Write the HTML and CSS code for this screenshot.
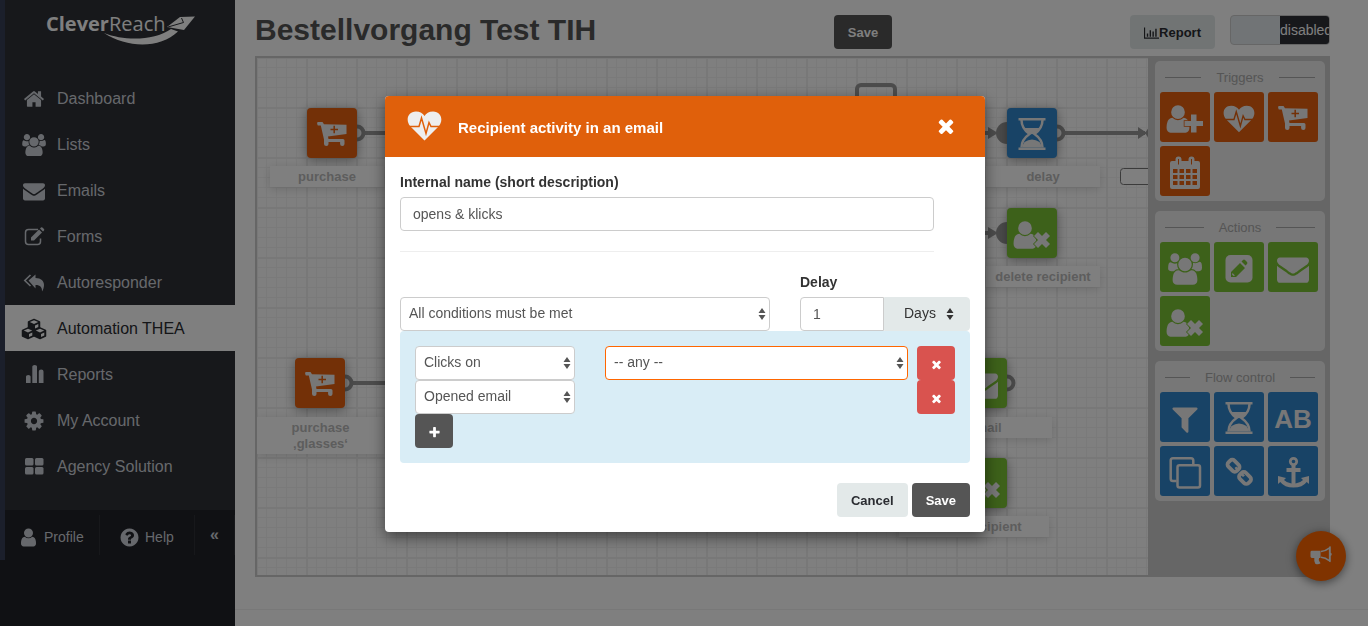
FILE: index.html
```html
<!DOCTYPE html>
<html lang="en">
<head>
<meta charset="utf-8">
<title>CleverReach – Automation THEA</title>
<link rel="stylesheet" href="styles.css">
</head>
<body>
<svg class="sprite" aria-hidden="true">
  <symbol id="home" viewBox="0 0 1792 1792"><path d="M1472 992v480q0 26-19 45t-45 19h-384v-384h-256v384h-384q-26 0-45-19t-19-45v-480q0-1 .5-3t.5-3l575-474 575 474q1 2 1 6zm223-69l-62 74q-8 9-21 11h-3q-13 0-21-7l-692-577-692 577q-12 8-24 7-13-2-21-11l-62-74q-8-10-7-23.500t11-21.500l719-599q32-26 76-26t76 26l244 204v-195q0-14 9-23t23-9h192q14 0 23 9t9 23v408l219 182q10 8 11 21.500t-7 23.500z"/></symbol>
  <symbol id="users" viewBox="0 0 2048 1792"><path d="M657 896q-162 5-265 128h-134q-82 0-138-40.500t-56-118.500q0-353 124-353 6 0 43.500 21t97.500 42.500 119 21.500q67 0 133-23-5 37-5 66 0 159 90 287zm1071 637q0 120-73 189.500t-194 69.500h-874q-121 0-194-69.500t-73-189.500q0-53 3.500-103.500t14-109 26.500-108.500 43-97.500 62-81 85.500-53.500 111.500-20q10 0 43 21.500t73 48 107 48 135 21.500 135-21.500 107-48 73-48 43-21.500q61 0 111.500 20t85.500 53.500 62 81 43 97.500 26.500 108.500 14 109 3.500 103.500zm-1024-1277q0 106-75 181t-181 75-181-75-75-181 75-181 181-75 181 75 75 181zm704 384q0 159-112.500 271.500t-271.500 112.500-271.500-112.500-112.500-271.500 112.500-271.500 271.500-112.500 271.500 112.500 112.500 271.500zm576 225q0 78-56 118.500t-138 40.500h-134q-103-123-265-128 90-128 90-287 0-29-5-66 66 23 133 23 59 0 119-21.500t97.500-42.500 43.500-21q124 0 124 353zm-128-609q0 106-75 181t-181 75-181-75-75-181 75-181 181-75 181 75 75 181z"/></symbol>
  <symbol id="envelope" viewBox="0 0 1792 1792"><path d="M1792 710v794q0 66-47 113t-113 47h-1472q-66 0-113-47t-47-113v-794q44 49 101 87 362 246 497 345 57 42 92.500 65.500t94.500 48 110 24.500h2q51 0 110-24.500t94.500-48 92.500-65.500q170-123 498-345 57-39 100-87zm0-294q0 79-49 151t-122 123q-376 261-468 325-10 7-42.500 31t-54 38.500-52 32.500-57.500 27-50 9h-2q-23 0-50-9t-57.500-27-52-32.500-54-38.500-42.500-31q-91-64-262-182.500t-205-142.500q-62-42-117-115.500t-55-136.500q0-78 41.500-130t118.500-52h1472q65 0 112.500 47t47.500 113z"/></symbol>
  <symbol id="user" viewBox="0 0 1792 1792"><path d="M1536 1399q0 109-62.500 187t-150.500 78h-854q-88 0-150.500-78t-62.500-187q0-85 8.500-160.500t31.500-152 58.500-131 94-89 134.500-34.500q131 128 313 128t313-128q76 0 134.500 34.500t94 89 58.500 131 31.500 152 8.500 160.500zm-256-887q0 159-112.500 271.500t-271.500 112.500-271.500-112.500-112.500-271.500 112.500-271.500 271.500-112.500 271.500 112.500 112.500 271.500z"/></symbol>
  <symbol id="cog" viewBox="0 0 1792 1792"><path d="M1152 896q0-106-75-181t-181-75-181 75-75 181 75 181 181 75 181-75 75-181zm512-109v222q0 12-8 23t-20 13l-185 28q-19 54-39 91 35 50 107 138 10 12 10 25t-9 23q-27 37-99 108t-94 71q-12 0-26-9l-138-108q-44 23-91 38-16 136-29 186-7 28-36 28h-222q-14 0-24.500-8.500t-11.500-21.500l-28-184q-49-16-90-37l-141 107q-10 9-25 9-14 0-25-11-126-114-165-168-7-10-7-23 0-12 8-23 15-21 51-66.500t54-70.500q-27-50-41-99l-183-27q-13-2-21-12.500t-8-23.500v-222q0-12 8-23t19-13l186-28q14-46 39-92-40-57-107-138-10-12-10-24 0-10 9-23 26-36 98.500-107.500t94.500-71.500q13 0 26 10l138 107q44-23 91-38 16-136 29-186 7-28 36-28h222q14 0 24.500 8.500t11.500 21.500l28 184q49 16 90 37l142-107q9-9 24-9 13 0 25 10 129 119 165 170 7 8 7 22 0 12-8 23-15 21-51 66.500t-54 70.500q26 50 41 98l183 28q13 2 21 12.500t8 23.500z"/></symbol>
  <symbol id="help" viewBox="0 0 1792 1792"><path d="M1024 1376v-192q0-14-9-23t-23-9h-192q-14 0-23 9t-9 23v192q0 14 9 23t23 9h192q14 0 23-9t9-23zm256-672q0-88-55.500-163t-138.500-116-170-41q-243 0-371 213-15 24 8 42l132 100q7 6 19 6 16 0 25-12 53-68 86-92 34-24 86-24 48 0 85.500 26t37.500 59q0 38-20 61t-68 45q-63 28-115.500 86.500t-52.500 125.500v36q0 14 9 23t23 9h192q14 0 23-9t9-23q0-19 21.500-49.500t54.500-49.500q32-18 49-28.500t46-35 44.500-48 28-60.500 12.500-81zm384 192q0 209-103 385.500t-279.500 279.500-385.500 103-385.500-103-279.500-279.500-103-385.500 103-385.500 279.500-279.500 385.500-103 385.500 103 279.500 279.500 103 385.500z"/></symbol>
  <symbol id="times" viewBox="0 0 1792 1792"><path d="M1490 1322q0 40-28 68l-136 136q-28 28-68 28t-68-28l-294-294-294 294q-28 28-68 28t-68-28l-136-136q-28-28-28-68t28-68l294-294-294-294q-28-28-28-68t28-68l136-136q28-28 68-28t68 28l294 294 294-294q28-28 68-28t68 28l136 136q28 28 28 68t-28 68l-294 294 294 294q28 28 28 68z"/></symbol>
  <symbol id="plus" viewBox="0 0 1792 1792"><path d="M1600 736v192q0 40-28 68t-68 28h-416v416q0 40-28 68t-68 28h-192q-40 0-68-28t-28-68v-416h-416q-40 0-68-28t-28-68v-192q0-40 28-68t68-28h416v-416q0-40 28-68t68-28h192q40 0 68 28t28 68v416h416q40 0 68 28t28 68z"/></symbol>
  <symbol id="filter" viewBox="0 0 1792 1792"><path d="M1595 295q17 41-14 70l-493 493v742q0 42-39 59-13 5-25 5-27 0-45-19l-256-256q-19-19-19-45v-486l-493-493q-31-29-14-70 17-39 59-39h1280q42 0 59 39z"/></symbol>
  <symbol id="edit" viewBox="0 0 22 22"><path d="M15 3.500H5.500a3 3 0 0 0-3 3v9a3 3 0 0 0 3 3h9a3 3 0 0 0 3-3v-3" fill="none" stroke="currentColor" stroke-width="1.500"/><path d="M8 11.500 16 3.500l3 3-8 8H8zM17 2.500l1-1q.7-.6 1.400 0l1.600 1.600q.6.700 0 1.400l-1 1z"/></symbol>
  <symbol id="reply" viewBox="0 0 22 22"><path d="M5.500 8.500 12.500 2.500v3.500c5.500 0 8.500 3 8.500 7 0 2.500-1 5-2 6.500.2-4-1.500-6.500-6.500-6.500v3.500z"/><path d="M7.500 3 1.800 8.500l5.700 5.500" fill="none" stroke="currentColor" stroke-width="1.600"/></symbol>
  <symbol id="cubes" viewBox="0 0 26 22"><g stroke="currentColor" stroke-width="1.500" stroke-linejoin="round"><path d="M7.500 4 13 1.500 18.500 4v5.500L13 12 7.500 9.500z"/><path class="cube-top" d="M8.800 4.100 13 2.300l4.200 1.800L13 5.900z"/><path class="cube-top" d="M14 7.500 17.300 6v3L14 10.400z"/><path d="M1.500 12.500 7 10l5.500 2.500V18L7 20.500 1.500 18z"/><path class="cube-top" d="M2.800 12.600 7 10.800l4.200 1.800L7 14.400zM8 16l3.300-1.500v3L8 18.900z"/><path d="M13.500 12.500 19 10l5.500 2.500V18L19 20.500 13.500 18z"/><path class="cube-top" d="M14.800 12.600 19 10.800l4.200 1.800-4.200 1.800zM20 16l3.300-1.500v3L20 18.900z"/></g></symbol>
  <symbol id="bars" viewBox="0 0 22 22"><path d="M3 19v-6.500q0-1.500 2.300-1.500t2.300 1.500V19zM9.300 19V2.500Q9.300 1 11.700 1T14 2.500V19zM15.800 19V7.500q0-2 2.400-2t2.300 2V19z"/></symbol>
  <symbol id="large" viewBox="0 0 22 22"><rect x="2" y="2" width="8.500" height="7.500" rx="1.500"/><rect x="12" y="2" width="8.500" height="7.500" rx="1.500"/><rect x="2" y="11" width="8.500" height="7.500" rx="1.500"/><rect x="12" y="11" width="8.500" height="7.500" rx="1.500"/></symbol>
  <symbol id="chart" viewBox="0 0 16 12"><path d="M0 0h1.200v10.800H16V12H0zM3 6.500h1.500V10H3zM6 3h1.500v7H6zM9 4.500h1.500V10H9zM12 1.500h1.500V10H12z"/></symbol>
  <symbol id="heart" viewBox="0 0 35 30"><path d="M17.500 29.500 3 15C-1.500 9.500 .5 .5 9 .5c4 0 7 2 8.500 4.500C19 2.500 22 .5 26 .5c8.500 0 10.500 9 6 14.500z"/><path class="cut" d="M0 15.500h12L14.500 7l4.500 15.500L22 11.500l2 4h11"/></symbol>
  <symbol id="t-heart" viewBox="0 0 50 50"><use href="#heart" x="9" y="13" width="32" height="28"/></symbol>
  <symbol id="t-cart" viewBox="0 0 50 50"><path d="M10.500 14h5l1.500 2.300 22.500.4v9.300L21 28.500l.5 2.500H36q1.500 0 1.500 1.500v3.500q0 2-2.200 2t-2.200-2V34H21.500v2q0 2-2.200 2T17 36v-4.500L13.800 17.500h-3q-1.300-1.700-.3-3.500z"/><path class="cut" d="M23.500 21.500h7.500M27.200 17.800v7.500"/></symbol>
  <symbol id="t-person" viewBox="0 0 50 50"><use href="#user" x="2" y="11" width="32" height="32"/></symbol>
  <symbol id="t-add" viewBox="0 0 50 50"><use href="#t-person" width="50" height="50"/><path class="halo" d="M31 22.500h5.500v6.500H43v5h-6.500v6.500H31V34h-6.500v-5H31z"/><path d="M31 22.500h5.500v6.500H43v5h-6.500v6.500H31V34h-6.500v-5H31z"/></symbol>
  <symbol id="t-remove" viewBox="0 0 50 50"><use href="#t-person" width="50" height="50"/><path class="halo" d="m31 24 4 4 4-4 4 4-4 4 4 4-4 4-4-4-4 4-4-4 4-4-4-4z"/><path d="m31 24 4 4 4-4 4 4-4 4 4 4-4 4-4-4-4 4-4-4 4-4-4-4z"/></symbol>
  <symbol id="t-calendar" viewBox="0 0 50 50"><path d="M12 15h3.500v-1.500a3 3 0 0 1 6 0V15h7v-1.500a3 3 0 0 1 6 0V15H38q2 0 2 2v24q0 2-2 2H12q-2 0-2-2V17q0-2 2-2z"/><path class="hole" d="M13 23h4.500v4H13zM19.500 23H24v4h-4.500zM26 23h4.500v4H26zM32.500 23H37v4h-4.500zM13 29h4.500v4H13zM19.500 29H24v4h-4.500zM26 29h4.500v4H26zM32.500 29H37v4h-4.500zM13 35h4.500v4H13zM19.500 35H24v4h-4.500zM26 35h4.500v4H26zM32.500 35H37v4h-4.500zM18 13h1v5.500h-1zM31 13h1v5.500h-1z"/></symbol>
  <symbol id="t-users" viewBox="0 0 50 50"><use href="#users" x="7" y="11" width="36" height="32"/></symbol>
  <symbol id="t-pencil" viewBox="0 0 50 50"><rect x="11.500" y="13" width="27" height="27.500" rx="5"/><path class="hole" d="m17 30 9-9 5 5-9 9h-5zM27.500 19.500l1.500-1.500q1-.8 2 0l2 2q.8 1 0 2L31.500 23.500z"/><path d="m18.500 31 2.500 2.500-1.500.5-1.500-1.500z"/></symbol>
  <symbol id="t-envelope" viewBox="0 0 50 50"><use href="#envelope" x="9" y="11" width="32" height="32"/></symbol>
  <symbol id="t-filter" viewBox="0 0 50 50"><use href="#filter" x="9" y="11" width="32" height="32"/></symbol>
  <symbol id="t-hourglass" viewBox="0 0 50 50"><path d="M11.500 10h27v2.500h-27zM11.500 39.500h27V42h-27z"/><path d="M14.500 12c0 6 3 10.500 8 14-5 3.500-8 7.500-8 13.500M35.500 12c0 6-3 10.500-8 14 5 3.500 8 7.500 8 13.500" fill="none" stroke="currentColor" stroke-width="2.500"/><path d="M17 20h16q-2 3.500-6.500 6h-3Q19 23.500 17 20zM15.500 39.500q0-3 2-5.500Q25 29 32.500 34q2 2.500 2 5.500z"/></symbol>
  <symbol id="t-clone" viewBox="0 0 50 50"><g fill="none" stroke="currentColor" stroke-width="2.500"><path d="M16.500 35H13q-2.300 0-2.300-2.300V14.500q0-2.300 2.300-2.300h18q2.300 0 2.300 2.300V19"/><rect x="17.500" y="19.200" width="22.500" height="22.300" rx="2"/></g></symbol>
  <symbol id="t-chain" viewBox="0 0 50 50"><g fill="none" stroke="currentColor" stroke-width="3.800"><rect x="13.500" y="15.500" width="12" height="8.500" rx="3" transform="rotate(45 19.500 19.800)"/><rect x="25" y="27.700" width="12" height="8.500" rx="3" transform="rotate(45 31 32)"/></g><path d="m20.500 22 1.800-1.500 2.500 2.500-1.500 2zM26.500 29l2-2 2.500 2.500-2 1.500z"/></symbol>
  <symbol id="t-anchor" viewBox="0 0 50 50"><circle cx="25.500" cy="15.500" r="3.200" fill="none" stroke="currentColor" stroke-width="2.800"/><path d="M23.500 19h4v3h5v4h-5v11.500q5-.7 7.500-3.500l-2-2 8-2v8l-2.300-2q-4 5.500-13.200 5.500T12.300 36L10 38v-8l8 2-2 2q2.500 2.800 7.500 3.500V26h-5v-4h5z"/></symbol>
  <symbol id="bullhorn" viewBox="0 0 24 20"><path d="M2 4.500h9V12H9.500q-1 2 .5 4l1 1.500q-2.500 2-5.500.500Q4 15 4.500 12H2q-1.500 0-1.500-1.500V6Q.5 4.500 2 4.500z"/><path d="M11.500 5.300Q16 5 20.500 1.500v13.500Q16 11.500 11.500 11.200" fill="none" stroke="currentColor" stroke-width="1.600"/><path d="M20 0h1.500v6.500q1.200.3 1.200 1.700t-1.200 1.800V16H20z"/></symbol>
  <symbol id="sort" viewBox="0 0 8 12"><path d="M4 0 7.500 5h-7zM4 12 .5 7h7z"/></symbol>
</svg>

<div class="app">
  <aside class="sidebar">
    <div class="sidebar-body">
      <a class="logo" href="#" aria-label="CleverReach">
        <svg viewBox="0 -8 152 40" width="152" height="40">
          <text x="0" y="18" class="logo-bold">Clever</text>
          <text x="63" y="18" class="logo-light">Reach</text>
          <path d="M58 20c20 8 50 8 67-4l7 2.500c-18 17-50 17-74 1.500z"/>
          <path d="M121 14 134 4l15-.5-11 13.500z"/><path class="logo-line" d="M122 14l15.500-4.500-2-4.500"/>
        </svg>
      </a>
      <nav class="menu">
        <a href="#"><svg><use href="#home"/></svg>Dashboard</a>
        <a href="#"><svg><use href="#users"/></svg>Lists</a>
        <a href="#"><svg><use href="#envelope"/></svg>Emails</a>
        <a href="#"><svg><use href="#edit"/></svg>Forms</a>
        <a href="#"><svg><use href="#reply"/></svg>Autoresponder</a>
        <a href="#" class="active" aria-current="page"><svg><use href="#cubes"/></svg>Automation THEA</a>
        <a href="#"><svg><use href="#bars"/></svg>Reports</a>
        <a href="#"><svg><use href="#cog"/></svg>My Account</a>
        <a href="#"><svg><use href="#large"/></svg>Agency Solution</a>
      </nav>
      <div class="sidebar-foot">
        <a class="profile" href="#"><svg><use href="#user"/></svg>Profile</a>
        <a class="help" href="#"><svg><use href="#help"/></svg>Help</a>
        <button class="collapse" type="button" aria-label="Collapse menu">«</button>
      </div>
    </div>
  </aside>

  <main class="main">
    <header class="head">
      <h1>Bestellvorgang Test TIH</h1>
      <div class="head-actions">
        <button class="btn dark" type="button">Save</button>
        <button class="btn light report" type="button"><svg><use href="#chart"/></svg>Report</button>
        <button class="toggle" type="button" role="switch" aria-checked="false"><span class="knob"></span><span class="state">disabled</span></button>
      </div>
    </header>

    <section class="editor">
      <div class="stage">
        <svg class="wires" width="900" height="520" aria-hidden="true">
          <g fill="none" stroke="#999" stroke-width="4">
            <path d="M107 75H200M95 325H200M720 75h14M720 175h14M808 75h80"/>
            <circle cx="100" cy="75" r="6.500"/><circle cx="88" cy="325" r="6.500"/><circle cx="800" cy="75" r="6.500"/><circle cx="750" cy="325" r="6.500"/>
            <rect x="600" y="27" width="38" height="40" rx="4"/>
          </g>
          <g fill="#999">
            <circle cx="750" cy="75" r="11"/><circle cx="750" cy="175" r="11"/>
            <path d="M731 69l10 6-10 6zM731 169l10 6-10 6zM881 69l9 6-9 6zM892 69v12l-4-6z"/>
          </g>
          <rect class="slot" x="863.500" y="110.500" width="60" height="16" rx="3"/>
          <rect class="slot" x="663.500" y="460.500" width="80" height="16" rx="3"/>
        </svg>
        <div class="node orange n-purchase"><svg><use href="#t-cart"/></svg></div><div class="caption c-purchase">purchase</div>
        <div class="node orange n-glasses"><svg><use href="#t-cart"/></svg></div><div class="caption c-glasses">purchase<br>‚glasses‘</div>
        <div class="node blue n-delay"><svg><use href="#t-hourglass"/></svg></div><div class="caption c-delay">delay</div>
        <div class="node green n-delete"><svg><use href="#t-remove"/></svg></div><div class="caption c-delete">delete recipient</div>
        <div class="node green n-email"><svg><use href="#t-envelope"/></svg></div><div class="caption c-email">email</div>
        <div class="node green n-last"><svg><use href="#t-remove"/></svg></div><div class="caption c-last">delete recipient</div>
      </div>
      <div class="palette">
        <section class="group orange">
          <h2>Triggers</h2>
          <div class="tiles">
            <button type="button" aria-label="New recipient"><svg><use href="#t-add"/></svg></button>
            <button type="button" aria-label="Recipient activity"><svg><use href="#t-heart"/></svg></button>
            <button type="button" aria-label="Purchase"><svg><use href="#t-cart"/></svg></button>
            <button type="button" aria-label="Date"><svg><use href="#t-calendar"/></svg></button>
          </div>
        </section>
        <section class="group green">
          <h2>Actions</h2>
          <div class="tiles">
            <button type="button" aria-label="Recipient list"><svg><use href="#t-users"/></svg></button>
            <button type="button" aria-label="Edit recipient"><svg><use href="#t-pencil"/></svg></button>
            <button type="button" aria-label="Send email"><svg><use href="#t-envelope"/></svg></button>
            <button type="button" aria-label="Delete recipient"><svg><use href="#t-remove"/></svg></button>
          </div>
        </section>
        <section class="group blue">
          <h2>Flow control</h2>
          <div class="tiles">
            <button type="button" aria-label="Filter"><svg><use href="#t-filter"/></svg></button>
            <button type="button" aria-label="Delay"><svg><use href="#t-hourglass"/></svg></button>
            <button type="button" class="ab">AB</button>
            <button type="button" aria-label="Clone"><svg><use href="#t-clone"/></svg></button>
            <button type="button" aria-label="Link"><svg><use href="#t-chain"/></svg></button>
            <button type="button" aria-label="Anchor"><svg><use href="#t-anchor"/></svg></button>
          </div>
        </section>
      </div>
    </section>
    <div class="page-foot"></div>
  </main>
</div>

<button class="fab" type="button" aria-label="News"><svg><use href="#bullhorn"/></svg></button>

<div class="overlay">
  <form class="modal" role="dialog" aria-labelledby="dialog-title">
    <header class="modal-head">
      <svg class="modal-icon"><use href="#heart"/></svg>
      <h2 id="dialog-title">Recipient activity in an email</h2>
      <button class="close" type="button" aria-label="Close"><svg><use href="#times"/></svg></button>
    </header>
    <div class="modal-body">
      <div class="name-field">
        <label for="name">Internal name (short description)</label>
        <input id="name" class="control" type="text" value="opens &amp; klicks">
      </div>
      <div class="rule-row">
        <div class="pick match"><select class="control" aria-label="Match"><option>All conditions must be met</option></select><svg><use href="#sort"/></svg></div>
        <div class="delay">
          <label for="delay">Delay</label>
          <div class="delay-group">
            <input id="delay" class="control" type="text" value="1">
            <div class="pick unit"><select class="control" aria-label="Unit"><option>Days</option></select><svg><use href="#sort"/></svg></div>
          </div>
        </div>
      </div>
      <div class="conditions">
        <div class="condition">
          <div class="pick"><select class="control" aria-label="Condition 1"><option>Clicks on</option></select><svg><use href="#sort"/></svg></div>
          <div class="pick any"><select class="control" aria-label="Link"><option>-- any --</option></select><svg><use href="#sort"/></svg></div>
          <button class="btn square red" type="button" aria-label="Remove"><svg><use href="#times"/></svg></button>
        </div>
        <div class="condition">
          <div class="pick"><select class="control" aria-label="Condition 2"><option>Opened email</option></select><svg><use href="#sort"/></svg></div>
          <span></span>
          <button class="btn square red" type="button" aria-label="Remove"><svg><use href="#times"/></svg></button>
        </div>
        <button class="btn square dark" type="button" aria-label="Add"><svg><use href="#plus"/></svg></button>
      </div>
      <div class="modal-foot">
        <button class="btn light" type="button">Cancel</button>
        <button class="btn dark" type="submit">Save</button>
      </div>
    </div>
  </form>
</div>
</body>
</html>
```

FILE: styles.css
```css
* { box-sizing: border-box; }
html, body { height: 100%; }
body {
  margin: 0;
  overflow: hidden;
  font: 14px/20px "Liberation Sans", Arial, sans-serif;
  color: #333;
  background: #fff;
}
svg { fill: currentColor; flex: none; }
button, input, select { font: inherit; margin: 0; }
button { cursor: pointer; border: 0; padding: 0; }
a { color: inherit; text-decoration: none; }
h1, h2 { margin: 0; }
.sprite { position: absolute; width: 0; height: 0; }

.app { display: flex; min-height: 100%; }

/* Sidebar */
.sidebar { flex: 0 0 235px; background: #202228; color: #cdd1d8; }
.sidebar-body { border-left: 5px solid #363e56; background: #2e3036; }
.logo { display: block; height: 75px; padding: 5px 0 0 41px; color: #fff; }
.logo-bold { font: bold 20px "Open Sans", "Noto Sans", sans-serif; }
.logo-light { font: 20px "Open Sans", "Noto Sans", sans-serif; }
.logo-line { fill: none; stroke: #2e3036; stroke-width: 1; }
.menu { display: flex; flex-direction: column; padding-bottom: 21px; font-size: 16px; }
.menu a { display: flex; align-items: center; gap: 10px; height: 46px; padding: 2px 0 0 16px; }
.menu svg { width: 26px; height: 22px; }
.menu .active { background: #fff; color: #2a2c31; }
.cube-top { fill: #fff; stroke: none; }
.sidebar-foot { display: flex; height: 50px; padding: 5px 0; background: #202228; }
.sidebar-foot > * { display: flex; align-items: center; border-right: 1px solid #2e3036; }
.sidebar-foot a { gap: 5px; padding-top: 4px; }
.sidebar-foot svg { width: 21px; height: 21px; }
.profile { flex: 0 0 95px; padding-left: 13px; }
.help { flex: 0 0 95px; padding-left: 19px; }
.collapse { flex: 1; justify-content: center; background: none; color: inherit; font-weight: bold; font-size: 16px; }

/* Page */
.main { flex: 1; min-width: 0; display: flex; flex-direction: column; }
.head { display: grid; grid-template-columns: 7fr 6fr; align-items: start; height: 56px; margin: 0 38px 0 20px; }
.head h1 { padding-top: 13px; font-size: 30px; line-height: 34px; color: #555; white-space: nowrap; }
.head-actions { display: flex; padding-top: 15px; }
.report { margin-left: auto; }
.report svg { width: 15px; height: 12px; }
.btn {
  display: inline-flex; align-items: center; justify-content: center;
  height: 34px; padding: 2px 14px 0; border-radius: 4px;
  font-size: 13px; font-weight: bold;
}
.dark { background: #555; color: #fff; }
.light { background: #e3e9e9; color: #2a2c31; }
.red { background: #d9534f; color: #fff; }
.square { width: 38px; padding: 2px 0 0; }
.square svg { width: 13px; height: 13px; }
.toggle { display: flex; width: 100px; height: 30px; margin-left: 15px; border: 1px solid #ccc; border-radius: 4px; overflow: hidden; background: #e3e9ec; }
.knob { flex: 0 0 49px; }
.state { flex: 1; height: 28px; line-height: 28px; background: #2e3036; color: #fff; text-align: left; }

.editor { display: flex; height: 521px; margin: 0 38px 0 20px; border: 2px solid #ccc; border-right: 0; }
.stage {
  position: relative; flex: 1; min-width: 0; overflow: hidden;
  background-image:
    linear-gradient(90deg, #f0f0f0 2px, transparent 2px),
    linear-gradient(#f0f0f0 2px, transparent 2px),
    linear-gradient(90deg, #f5f5f5 1px, transparent 1px),
    linear-gradient(#f5f5f5 1px, transparent 1px);
  background-size: 50px 50px, 50px 50px, 10px 10px, 10px 10px;
  background-position: -1px -1px;
}
.wires { position: absolute; left: 0; top: 0; }
.slot { fill: #fff; stroke: #777; }
.orange { --tile: #e6600e; }
.green { --tile: #7ac234; }
.blue { --tile: #3086cc; }
.cut { fill: none; stroke: var(--tile); stroke-width: 1.5; }
.hole { fill: var(--tile); }
.halo { fill: var(--tile); stroke: var(--tile); stroke-width: 1.5; }

/* Nodes lie freely on the canvas */
.node { position: absolute; width: 50px; height: 50px; border-radius: 4px; background: var(--tile); color: #eee; box-shadow: 0 2px 12px rgba(0, 0, 0, .4); }
.node svg, .tiles svg { display: block; width: 50px; height: 50px; }
.caption { position: absolute; width: 114px; padding: 3px 0 2px; background: #fff; color: #bbb; font-size: 13px; font-weight: bold; line-height: 16px; text-align: center; box-shadow: 0 2px 10px rgba(0, 0, 0, .15); }
.n-purchase { left: 50px; top: 50px; } .c-purchase { left: 13px; top: 108px; }
.n-glasses { left: 38px; top: 300px; } .c-glasses { left: 0; top: 359px; width: 127px; }
.n-delay { left: 750px; top: 50px; } .c-delay { left: 729px; top: 108px; }
.n-delete { left: 750px; top: 150px; } .c-delete { left: 729px; top: 208px; }
.n-email { left: 700px; top: 300px; } .c-email { left: 661px; top: 359px; width: 134px; }
.n-last { left: 700px; top: 400px; } .c-last { left: 642px; top: 458px; width: 150px; }

.palette { flex: 0 0 182px; display: flex; flex-direction: column; gap: 10px; padding: 3px 5px 0 7px; background: #ccc; }
.group { height: 140px; padding: 0 5px; border-radius: 5px; background: #eee; }
.group h2 { display: flex; align-items: center; gap: 15px; height: 31px; padding: 2px 5px 0; font-size: 13px; font-weight: normal; color: #aaa; }
.group h2::before, .group h2::after { content: ""; flex: 1; height: 1px; background: #aaa; }
.tiles { display: flex; flex-wrap: wrap; gap: 4px; }
.tiles button { width: 50px; height: 50px; border-radius: 3px; background: var(--tile); color: #eee; }
.tiles .ab { padding-top: 4px; font-size: 26px; font-weight: bold; }

.page-foot { margin-top: 32px; border-top: 1px solid #f0f0f0; }
.fab { position: fixed; right: 22px; bottom: 45px; width: 50px; height: 50px; border-radius: 50%; background: #f60; color: #eee; box-shadow: 0 2px 10px rgba(0, 0, 0, .5); display: flex; align-items: center; justify-content: center; }
.fab svg { width: 23px; height: 20px; }

/* Dialog */
.overlay { position: fixed; inset: 0; display: flex; align-items: flex-start; justify-content: center; padding: 96px 0 0 2px; background: rgba(0, 0, 0, .5); }
.modal { width: 600px; overflow: hidden; border-radius: 4px; background: #fff; box-shadow: 0 5px 15px rgba(0, 0, 0, .5); }
.modal-head { --tile: #e0600b; display: flex; align-items: center; height: 61px; padding: 0 28px 2px 22px; background: #e0600b; color: #fff; }
.modal-icon { width: 35px; height: 30px; margin-right: 16px; color: #eee; }
.modal-head h2 { flex: 1; padding-top: 4px; font-size: 15px; }
.close { display: flex; background: none; color: #fff; }
.close svg { width: 22px; height: 22px; }
.modal-body { padding: 15px; }
label { display: block; font-weight: bold; padding-bottom: 5px; }
.control { display: block; width: 100%; height: 34px; padding: 0 12px; border: 1px solid #ccc; border-radius: 4px; background: #fff; color: #555; outline: 0; }
.name-field { margin-right: 36px; padding-bottom: 20px; border-bottom: 1px solid #eee; }
.rule-row { display: flex; align-items: flex-end; gap: 30px; padding-top: 20px; }
.match { flex: 1; }
.delay { flex: 0 0 170px; }
.delay-group { display: flex; }
.delay-group > input { flex: 0 0 84px; width: 84px; border-radius: 4px 0 0 4px; }
.pick { position: relative; }
.pick select { appearance: none; padding: 0 24px 2px 8px; }
.pick svg { position: absolute; right: 4px; top: 11px; width: 8px; height: 12px; color: #555; pointer-events: none; }
.unit { flex: 1; }
.unit select { padding-left: 19px; border-color: #e3e9e9; border-radius: 0 4px 4px 0; background: #e3e9e9; color: #333; }
.unit svg { right: 16px; color: #333; }
.conditions { padding: 15px; border-radius: 4px; background: #d9edf6; }
.condition { display: grid; grid-template-columns: 160px 1fr 38px; }
.any { margin: 0 9px 0 30px; }
.any select { border-color: #f60; }
.conditions .btn { display: flex; }
.modal-foot { display: flex; justify-content: flex-end; gap: 4px; padding-top: 20px; }
```
